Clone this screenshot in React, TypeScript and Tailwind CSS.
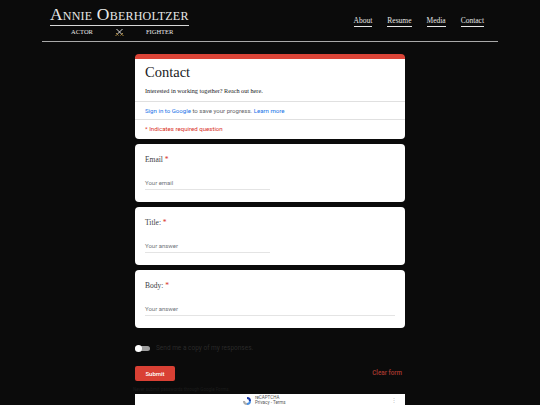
import React from "react";

const serif = "font-['Liberation_Serif','Times_New_Roman',serif]";
const sans = "font-['Roboto','Liberation_Sans',sans-serif]";

function Swords() {
  return (
    <svg width="9" height="9" viewBox="0 0 18 18" className="block">
      <path d="M3 2 L14 13" stroke="#d6d6d6" strokeWidth="2" />
      <path d="M15 2 L4 13" stroke="#d6d6d6" strokeWidth="2" />
      <path d="M11 15 L16 10" stroke="#b08a3a" strokeWidth="2" />
      <path d="M7 15 L2 10" stroke="#b08a3a" strokeWidth="2" />
      <path d="M15 14 L17 16" stroke="#b08a3a" strokeWidth="2" />
      <path d="M3 14 L1 16" stroke="#b08a3a" strokeWidth="2" />
    </svg>
  );
}

function NavLink({ label }: { label: string }) {
  return (
    <a className="text-[7.5px] text-[#e6e6e6] border-b border-[#e6e6e6] pb-[1px] leading-none">
      {label}
    </a>
  );
}

function QuestionCard({
  label,
  placeholder,
  wide,
}: {
  label: string;
  placeholder: string;
  wide?: boolean;
}) {
  return (
    <div className="bg-white rounded-[4px] px-[10px] pt-[12px] h-[58px]">
      <div className={`${serif} text-[7.5px] font-normal text-[#3c4043] leading-none`}>
        {label} <span className="text-[#d93025]">*</span>
      </div>
      <div
        className={`${sans} mt-[17px] text-[6px] text-[#70757a] leading-none pb-[3px] border-b border-[#e4e4e4] ${
          wide ? "w-[250px]" : "w-[125px]"
        }`}
      >
        {placeholder}
      </div>
    </div>
  );
}

export default function App() {
  return (
    <div className="w-[540px] h-[405px] bg-[#0b0b0b] overflow-hidden">
      <header className="mx-[42px] h-[42px] border-b border-[#a9a9a9] flex justify-between items-start">
        <div className={`${serif} ml-[8px] mt-[6px] text-[#e8e8e8]`}>
          <div className="text-[17.5px] leading-none [font-variant:small-caps] tracking-[0.2px] pb-[1px] border-b border-[#d8d8d8]">
            Annie Oberholtzer
          </div>
          <div className="flex items-center text-[6.5px] mt-[2px] leading-none">
            <span className="ml-[21px]">ACTOR</span>
            <span className="ml-[22px]">
              <Swords />
            </span>
            <span className="ml-[22px]">FIGHTER</span>
          </div>
        </div>
        <nav className={`${serif} mr-[14px] mt-[17px] flex gap-[15px]`}>
          <NavLink label="About" />
          <NavLink label="Resume" />
          <NavLink label="Media" />
          <NavLink label="Contact" />
        </nav>
      </header>

      <main className="w-[270px] mx-auto mt-[12px] flex flex-col gap-[5px]">
        <div className="bg-white rounded-[4px] border-t-[5px] border-[#db4437]">
          <div className="px-[10px] pt-[6px] pb-[7px]">
            <div className={`${serif} text-[14.5px] text-[#202124] leading-none`}>Contact</div>
            <div className={`${serif} text-[6.2px] text-[#202124] mt-[8px] leading-none`}>
              Interested in working together? Reach out here.
            </div>
          </div>
          <div className={`${sans} border-t border-[#e0e0e0] px-[10px] pt-[6px] pb-[5px] text-[6.1px] leading-none text-[#5f6368]`}>
            <span className="text-[#1a73e8]">Sign in to Google</span> to save your progress.{" "}
            <span className="text-[#1a73e8]">Learn more</span>
          </div>
          <div className={`${sans} border-t border-[#e0e0e0] px-[10px] pt-[6px] pb-[7px] text-[6.1px] leading-none text-[#d93025]`}>
            * Indicates required question
          </div>
        </div>

        <QuestionCard label="Email" placeholder="Your email" />
        <QuestionCard label="Title:" placeholder="Your answer" />
        <QuestionCard label="Body:" placeholder="Your answer" wide />

        <div className={`${sans} flex items-center gap-[6px] mt-[12px]`}>
          <div className="relative w-[15px] h-[5px] rounded-full bg-[#9e9e9e]">
            <div className="absolute left-0 top-[-1px] w-[7px] h-[7px] rounded-full bg-white" />
          </div>
          <span className="text-[6.5px] text-[#2a2a2a] leading-none">Send me a copy of my responses.</span>
        </div>

        <div className={`${sans} flex items-center justify-between mt-[10px]`}>
          <button className="w-[40px] h-[15px] rounded-[2px] bg-[#d94034] text-white text-[6px] font-medium">
            Submit
          </button>
          <span className="text-[6.3px] text-[#a8392f] font-medium mr-[3px]">Clear form</span>
        </div>

        <div className={`${sans} text-[4.5px] text-[#1c1c1c] leading-none mt-[2px] -ml-[2px]`}>
          Never submit passwords through Google Forms.
        </div>

        <div className="bg-white h-[20px] -mt-[4px] flex items-start pl-[107px] pt-[1px] relative">
          <svg width="10" height="10" viewBox="0 0 20 20" className="mt-[1px]">
            <path d="M10 2 A8 8 0 0 1 18 10 L14 10 A4 4 0 0 0 10 6 Z" fill="#1c3aa9" />
            <path d="M18 10 A8 8 0 0 1 10 18 L10 14 A4 4 0 0 0 14 10 Z" fill="#4a90e2" />
            <path d="M10 18 A8 8 0 0 1 2 10 L6 10 A4 4 0 0 0 10 14 Z" fill="#ababab" />
          </svg>
          <div className={`${sans} ml-[3px] text-[4.5px] text-[#555] leading-[5px]`}>
            <div>reCAPTCHA</div>
            <div>Privacy - Terms</div>
          </div>
          <span className="absolute right-[8px] top-[3px] text-[6px] leading-none text-[#bbb]">⋮</span>
        </div>
      </main>
    </div>
  );
}
